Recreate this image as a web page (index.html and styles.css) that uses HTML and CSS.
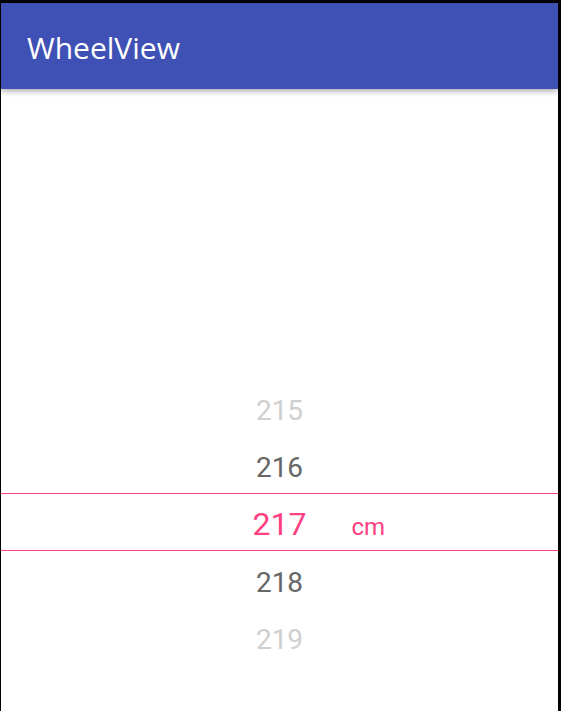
FILE: index.html
```html
<!DOCTYPE html>
<html>
<head>
<meta charset="utf-8">
<link rel="stylesheet" href="styles.css">
</head>
<body>
<div class="screen">
  <header class="appbar">
    <h1 class="title">WheelView</h1>
  </header>
  <main class="content">
    <div class="wheel">
      <div class="item far">215</div>
      <div class="item near">216</div>
      <div class="item selected">
        <span></span>
        <span class="value">217</span>
        <span class="unit">cm</span>
      </div>
      <div class="item near">218</div>
      <div class="item far">219</div>
    </div>
  </main>
</div>
</body>
</html>
```
FILE: styles.css
```css
html, body {
  margin: 0;
  padding: 0;
  background: #000;
  height: 100%;
  overflow: hidden;
}
.screen {
  margin: 3px 3px 0 1px;
  height: 708px;
  background: #fff;
  display: flex;
  flex-direction: column;
  font-family: Roboto, "Liberation Sans", sans-serif;
}
.appbar {
  height: 86px;
  background: #3F51B5;
  box-shadow: 0 2px 6px rgba(0,0,0,0.35);
  position: relative;
  z-index: 1;
  box-sizing: border-box;
  padding: 30px 0 0 26px;
}
.title {
  margin: 0;
  color: #fff;
  font-family: "Open Sans", Roboto, sans-serif;
  font-weight: 400;
  font-size: 30px;
  line-height: 30px;
}
.content {
  flex: 1;
  padding-top: 290px;
}
.wheel {
  display: flex;
  flex-direction: column;
}
.item {
  height: 57px;
  box-sizing: border-box;
  padding-top: 5px;
  display: flex;
  align-items: center;
  justify-content: center;
  font-size: 28px;
}
.far { color: #cfcfcf; }
.near { color: #666; }
.selected {
  height: 58px;
  padding-top: 0;
  border-top: 1px solid #FF4081;
  border-bottom: 1px solid #FF4081;
  display: grid;
  grid-template-columns: 1fr auto 1fr;
  align-items: baseline;
  align-content: center;
  color: #FF4081;
}
.value {
  font-size: 32px;
  line-height: 40px;
  padding-top: 3px;
}
.unit {
  font-size: 24px;
  padding-left: 45px;
}
```
